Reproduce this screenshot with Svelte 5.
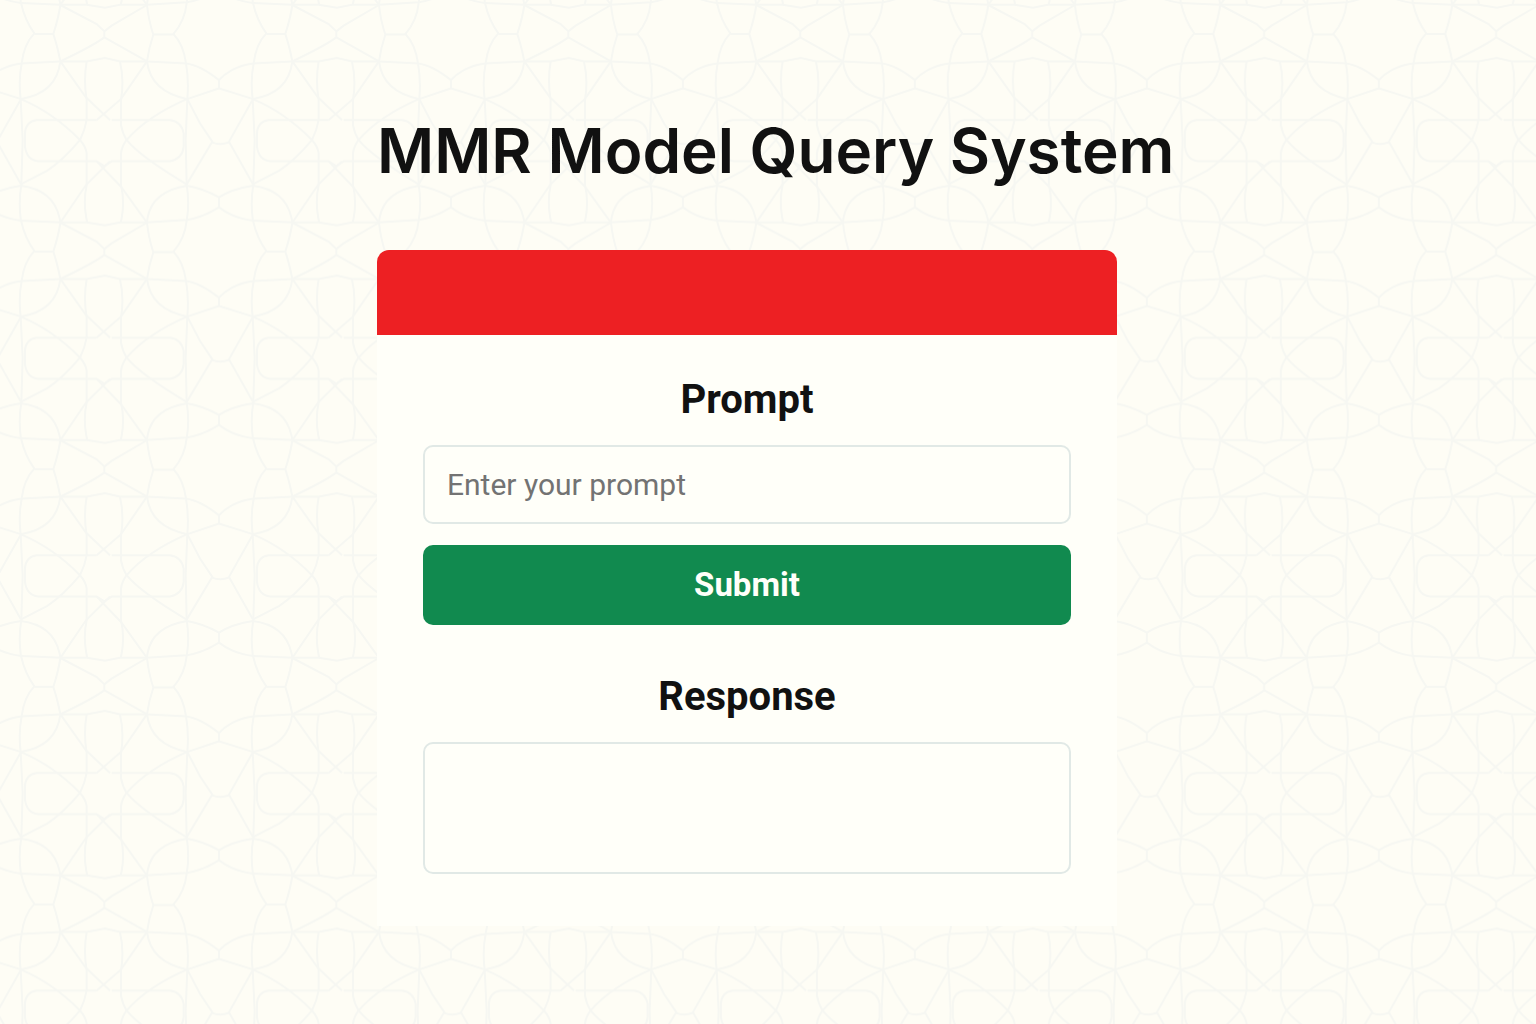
<script>
  let prompt = $state('');
  let response = $state('');

  const motif = [
    // side rails
    'M65 190Q55 240 62 297L68 420L64 553Q55 610 63 662',
    'M558 190Q567 240 562 297L557 420L560 553Q569 610 560 662',
    // necks between rows
    'M63 662Q75 715 103 753Q72 785 65 843M560 662Q555 715 520 755Q550 785 558 843',
    'M103 755H160M460 756H520',
    'M181 668Q176 705 160 755Q172 790 181 837M441 668Q446 715 460 757Q447 795 441 837',
    'M181 668L290 725L313 747V765Q280 790 181 837M441 668L335 730L313 747M313 765L441 837',
    // upper and lower bands
    'M657 240Q600 195 558 190L441 184H360L315 174L260 184H181L65 190Q0 198 -39 240',
    'M657 240V265L562 297M657 265L759 297',
    'M181 184Q170 280 62 297M441 184Q452 275 562 297',
    'M62 557Q168 570 181 668M561 557Q448 575 441 668',
    'M560 557Q610 565 657 592Q700 565 759 557M657 592V622Q610 652 560 660L441 667H360L315 676L260 667H181L63 662',
    'M657 622Q700 655 759 662',
    // hourglass between stars
    'M562 297L600 370L637 425L560 553M759 297L687 425L759 553M637 427Q660 437 687 427',
    // upright capsule
    'M260 185Q250 240 260 300V360Q255 390 240 420Q258 440 260 460V555Q248 610 262 668',
    'M360 185Q373 240 363 300V375Q367 400 380 420Q365 440 363 460V555Q376 610 362 668',
    // flat capsule
    'M290 360H110Q76 365 75 400V440Q80 480 115 484H290L313 498L335 484H510Q548 475 551 440V400Q545 365 510 360H335',
    // star rays
    'M181 184L258 292L330 360M441 184L363 297L290 360',
    'M181 668L258 555L330 484M441 668L363 560L290 484',
    'M62 297Q160 338 240 420Q190 480 142 512L62 553M561 297Q440 350 380 420Q420 470 560 553'
  ];
</script>

<div class="page">
  <svg class="backdrop" aria-hidden="true">
    <defs>
      <g id="motif">
        {#each motif as d}
          <path {d} />
        {/each}
      </g>
      <pattern id="tiles" width="696" height="653" patternUnits="userSpaceOnUse" patternTransform="scale(0.3333)">
        <use href="#motif" />
        <use href="#motif" x="-696" />
        <use href="#motif" y="-653" />
        <use href="#motif" x="-696" y="-653" />
        <use href="#motif" x="696" />
      </pattern>
    </defs>
    <rect width="100%" height="100%" fill="url(#tiles)" />
  </svg>

  <main>
    <h1>MMR Model Query System</h1>
    <section class="card">
      <div class="banner"></div>
      <form class="body" onsubmit={(e) => e.preventDefault()}>
        <label for="prompt">Prompt</label>
        <input id="prompt" type="text" placeholder="Enter your prompt" bind:value={prompt} />
        <button type="submit">Submit</button>
        <label class="second" for="response">Response</label>
        <textarea id="response" readonly value={response}></textarea>
      </form>
    </section>
  </main>
</div>

<style>
  :global(body) {
    background: #fefdf5;
  }

  .page {
    position: relative;
    box-sizing: border-box;
    min-height: 100vh;
    padding: 106px 42px 98px 0;
    font-family: Roboto, sans-serif;
    color: #111;
  }

  .backdrop {
    position: absolute;
    inset: 0;
    width: 100%;
    height: 100%;
    fill: none;
    stroke: #f6f7f2;
    stroke-width: 6;
  }

  .backdrop rect {
    stroke: none;
  }

  main {
    position: relative;
    max-width: 740px;
    margin: 0 auto;
  }

  h1 {
    margin: 0 0 54px;
    font: 600 62px/90px Inter, sans-serif;
    white-space: nowrap;
  }

  .card {
    overflow: hidden;
    border-radius: 12px 12px 0 0;
    background: #fffff9;
  }

  .banner {
    height: 85px;
    background: #ed2023;
  }

  .body {
    display: flex;
    flex-direction: column;
    padding: 41px 46px 52px;
  }

  label {
    margin-bottom: 21px;
    font-size: 40px;
    font-weight: 700;
    line-height: 48px;
    text-align: center;
  }

  .second {
    margin-top: 48px;
  }

  input,
  textarea {
    box-sizing: border-box;
    width: 100%;
    margin: 0;
    padding: 0 22px;
    border: 2px solid #e1e9e6;
    border-radius: 10px;
    background: transparent;
    color: #111;
    font: 400 30px/40px Roboto, sans-serif;
    outline: none;
  }

  input {
    height: 79px;
  }

  input::placeholder {
    color: #737373;
    opacity: 1;
  }

  textarea {
    display: block;
    height: 132px;
    padding: 16px 22px;
    resize: none;
  }

  button {
    height: 80px;
    margin-top: 21px;
    padding: 0;
    border: 0;
    border-radius: 10px;
    background: #118a4f;
    color: #fffff9;
    font: 700 33px/42px Roboto, sans-serif;
    cursor: pointer;
  }
</style>
